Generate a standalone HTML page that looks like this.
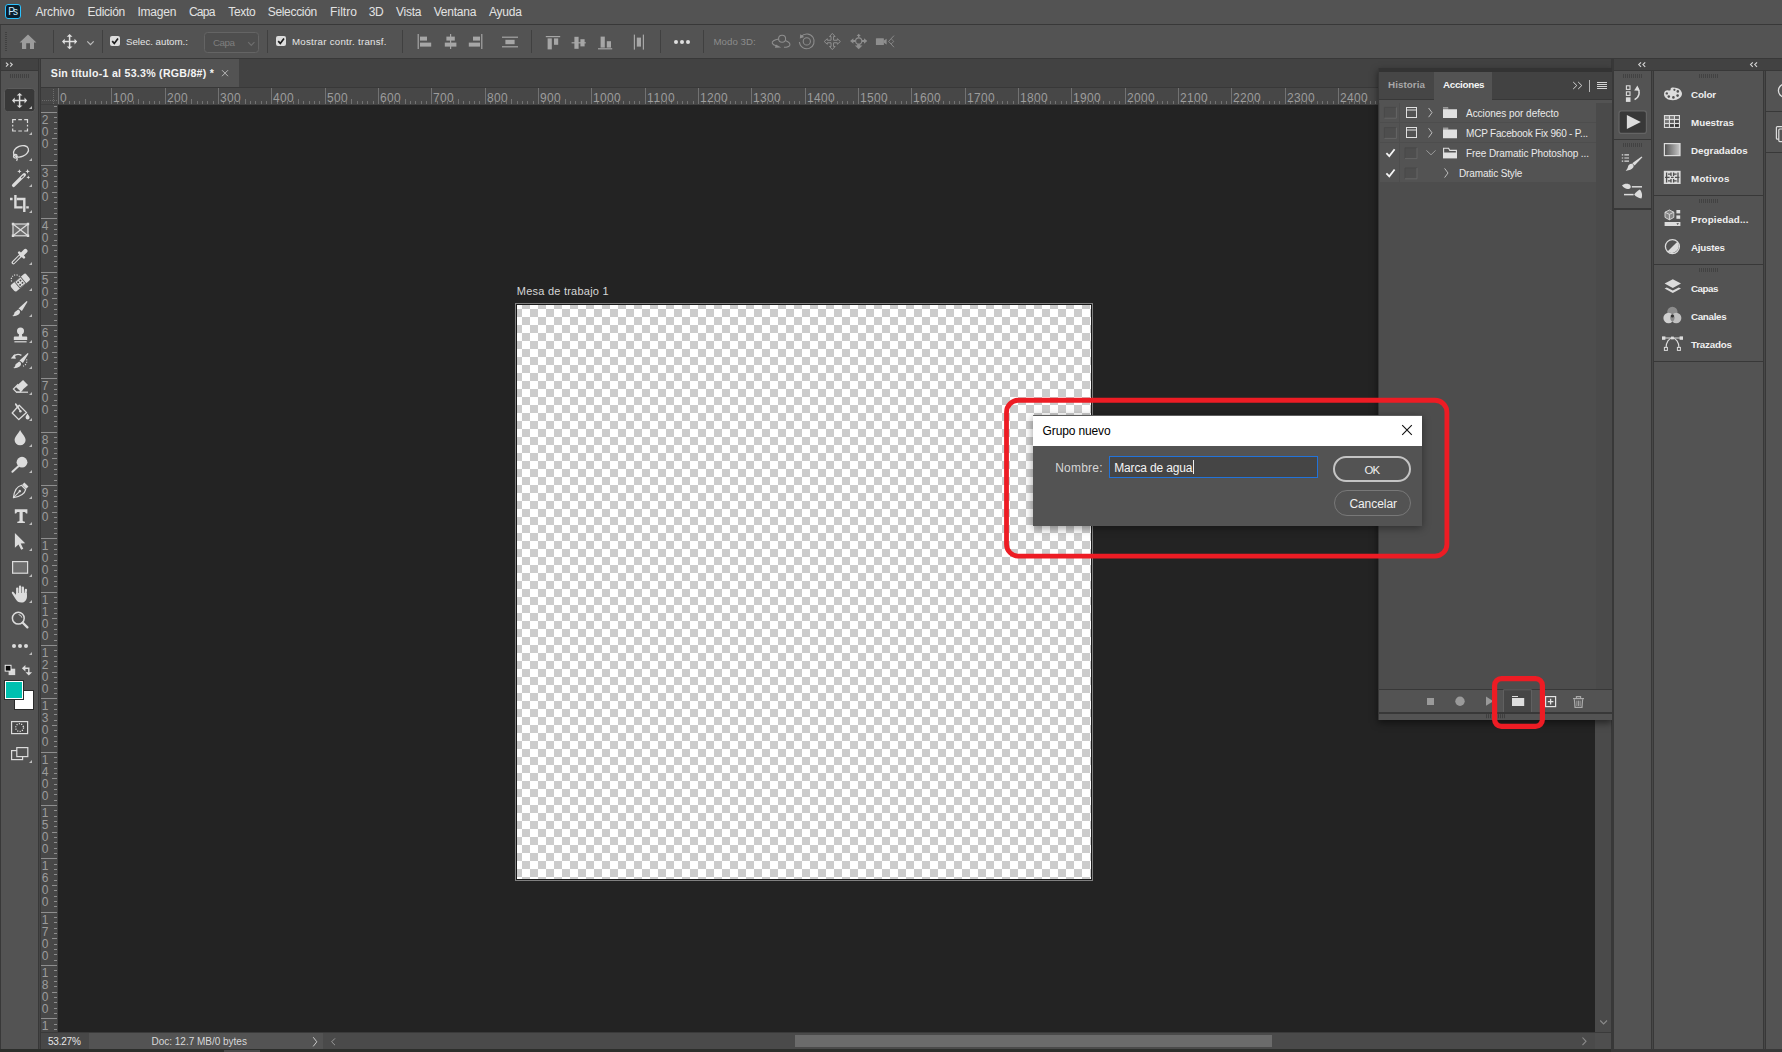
<!DOCTYPE html>
<html lang="es"><head><meta charset="utf-8"><title>Photoshop - Grupo nuevo</title>
<style>
html,body{margin:0;padding:0;}
body{width:1782px;height:1052px;overflow:hidden;background:#535353;position:relative;font-family:"Liberation Sans",sans-serif;}
#app{position:absolute;left:0;top:0;width:1782px;height:1052px;overflow:hidden;}
#app div,#app svg,#app span.t{position:absolute;}
span.t{white-space:nowrap;line-height:1;}
svg{overflow:visible;}
</style></head><body><div id="app">
<div style="left:0px;top:0px;width:1782px;height:24px;background:#535353;"></div>
<div style="left:0px;top:24px;width:1782px;height:1px;background:#383838;"></div>
<div style="left:5px;top:4px;width:14px;height:13px;background:#0a1e2c;border:1px solid #2cc2ff;border-radius:3px;"></div>
<span class="t" style="left:8.20px;top:6.54px;font-size:10px;color:#c8ecff;letter-spacing:-1.870px;">Ps</span>
<span class="t" style="left:35.40px;top:5.64px;font-size:12px;color:#e2e2e2;letter-spacing:-0.136px;">Archivo</span>
<span class="t" style="left:87.50px;top:5.64px;font-size:12px;color:#e2e2e2;letter-spacing:-0.276px;">Edición</span>
<span class="t" style="left:137.50px;top:5.64px;font-size:12px;color:#e2e2e2;letter-spacing:-0.245px;">Imagen</span>
<span class="t" style="left:189.00px;top:5.64px;font-size:12px;color:#e2e2e2;letter-spacing:-0.796px;">Capa</span>
<span class="t" style="left:228.20px;top:5.64px;font-size:12px;color:#e2e2e2;letter-spacing:-0.270px;">Texto</span>
<span class="t" style="left:267.70px;top:5.64px;font-size:12px;color:#e2e2e2;letter-spacing:-0.316px;">Selección</span>
<span class="t" style="left:330.00px;top:5.64px;font-size:12px;color:#e2e2e2;letter-spacing:0.067px;">Filtro</span>
<span class="t" style="left:368.70px;top:5.64px;font-size:12px;color:#e2e2e2;letter-spacing:-0.240px;">3D</span>
<span class="t" style="left:396.00px;top:5.64px;font-size:12px;color:#e2e2e2;letter-spacing:-0.240px;">Vista</span>
<span class="t" style="left:433.70px;top:5.64px;font-size:12px;color:#e2e2e2;letter-spacing:-0.224px;">Ventana</span>
<span class="t" style="left:488.90px;top:5.64px;font-size:12px;color:#e2e2e2;letter-spacing:-0.202px;">Ayuda</span>
<div style="left:0px;top:25px;width:1782px;height:33px;background:#535353;"></div>
<div style="left:0px;top:58px;width:1782px;height:1px;background:#383838;"></div>
<div style="left:0px;top:25px;width:1px;height:33px;background:#3e3e3e;"></div>
<div style="left:0px;top:59px;width:41px;height:993px;background:#383838;"></div>
<div style="left:1px;top:59px;width:37px;height:11px;background:#424242;"></div>
<div style="left:1px;top:71px;width:37px;height:978px;background:#535353;"></div>
<div style="left:39px;top:59px;width:1px;height:990px;background:#444444;"></div>
<div style="left:41px;top:59px;width:1571px;height:28px;background:#424242;"></div>
<div style="left:41px;top:59px;width:198px;height:28px;background:#535353;"></div>
<div style="left:41px;top:87px;width:1571px;height:1px;background:#383838;"></div>
<span class="t" style="left:50.80px;top:68.13px;font-size:10.6px;color:#f4f4f4;font-weight:700;letter-spacing:0.267px;">Sin título-1 al 53.3% (RGB/8#) *</span>
<svg style="left:221px;top:69px;" width="8" height="8" viewBox="221 69 8 8"><path d="M222,70.2 L228,76.2 M228,70.2 L222,76.2" stroke="#b8b8b8" stroke-width="1" fill="none"/></svg>
<div style="left:41px;top:88px;width:1571px;height:17px;background:#474747;"></div>
<div style="left:41px;top:105px;width:17px;height:928px;background:#474747;"></div>
<div style="left:58px;top:105px;width:1537px;height:928px;background:#232323;"></div>
<div style="left:1595px;top:105px;width:16px;height:928px;background:#4a4a4a;"></div>
<div style="left:1611px;top:59px;width:3px;height:993px;background:#383838;"></div>
<div style="left:1612px;top:59px;width:1px;height:990px;background:#484848;"></div>
<div style="left:41px;top:104px;width:1571px;height:1px;background:#3f3f3f;"></div>
<div style="left:57px;top:105px;width:1px;height:928px;background:#3f3f3f;"></div>
<svg style="left:41px;top:88px;" width="1571" height="17" viewBox="41 88 1571 17"><g fill="#727272"><rect x="58" y="88" width="1" height="16"/><rect x="63" y="101" width="1" height="3"/><rect x="69" y="101" width="1" height="3"/><rect x="74" y="101" width="1" height="3"/><rect x="79" y="101" width="1" height="3"/><rect x="85" y="99" width="1" height="5"/><rect x="90" y="101" width="1" height="3"/><rect x="95" y="101" width="1" height="3"/><rect x="101" y="101" width="1" height="3"/><rect x="106" y="101" width="1" height="3"/><rect x="111" y="88" width="1" height="16"/><rect x="117" y="101" width="1" height="3"/><rect x="122" y="101" width="1" height="3"/><rect x="127" y="101" width="1" height="3"/><rect x="133" y="101" width="1" height="3"/><rect x="138" y="99" width="1" height="5"/><rect x="143" y="101" width="1" height="3"/><rect x="149" y="101" width="1" height="3"/><rect x="154" y="101" width="1" height="3"/><rect x="159" y="101" width="1" height="3"/><rect x="165" y="88" width="1" height="16"/><rect x="170" y="101" width="1" height="3"/><rect x="175" y="101" width="1" height="3"/><rect x="181" y="101" width="1" height="3"/><rect x="186" y="101" width="1" height="3"/><rect x="191" y="99" width="1" height="5"/><rect x="197" y="101" width="1" height="3"/><rect x="202" y="101" width="1" height="3"/><rect x="207" y="101" width="1" height="3"/><rect x="213" y="101" width="1" height="3"/><rect x="218" y="88" width="1" height="16"/><rect x="223" y="101" width="1" height="3"/><rect x="229" y="101" width="1" height="3"/><rect x="234" y="101" width="1" height="3"/><rect x="239" y="101" width="1" height="3"/><rect x="245" y="99" width="1" height="5"/><rect x="250" y="101" width="1" height="3"/><rect x="255" y="101" width="1" height="3"/><rect x="261" y="101" width="1" height="3"/><rect x="266" y="101" width="1" height="3"/><rect x="271" y="88" width="1" height="16"/><rect x="277" y="101" width="1" height="3"/><rect x="282" y="101" width="1" height="3"/><rect x="287" y="101" width="1" height="3"/><rect x="293" y="101" width="1" height="3"/><rect x="298" y="99" width="1" height="5"/><rect x="303" y="101" width="1" height="3"/><rect x="309" y="101" width="1" height="3"/><rect x="314" y="101" width="1" height="3"/><rect x="319" y="101" width="1" height="3"/><rect x="325" y="88" width="1" height="16"/><rect x="330" y="101" width="1" height="3"/><rect x="335" y="101" width="1" height="3"/><rect x="341" y="101" width="1" height="3"/><rect x="346" y="101" width="1" height="3"/><rect x="351" y="99" width="1" height="5"/><rect x="357" y="101" width="1" height="3"/><rect x="362" y="101" width="1" height="3"/><rect x="367" y="101" width="1" height="3"/><rect x="373" y="101" width="1" height="3"/><rect x="378" y="88" width="1" height="16"/><rect x="383" y="101" width="1" height="3"/><rect x="389" y="101" width="1" height="3"/><rect x="394" y="101" width="1" height="3"/><rect x="399" y="101" width="1" height="3"/><rect x="405" y="99" width="1" height="5"/><rect x="410" y="101" width="1" height="3"/><rect x="415" y="101" width="1" height="3"/><rect x="421" y="101" width="1" height="3"/><rect x="426" y="101" width="1" height="3"/><rect x="431" y="88" width="1" height="16"/><rect x="437" y="101" width="1" height="3"/><rect x="442" y="101" width="1" height="3"/><rect x="447" y="101" width="1" height="3"/><rect x="453" y="101" width="1" height="3"/><rect x="458" y="99" width="1" height="5"/><rect x="463" y="101" width="1" height="3"/><rect x="469" y="101" width="1" height="3"/><rect x="474" y="101" width="1" height="3"/><rect x="479" y="101" width="1" height="3"/><rect x="485" y="88" width="1" height="16"/><rect x="490" y="101" width="1" height="3"/><rect x="495" y="101" width="1" height="3"/><rect x="501" y="101" width="1" height="3"/><rect x="506" y="101" width="1" height="3"/><rect x="511" y="99" width="1" height="5"/><rect x="517" y="101" width="1" height="3"/><rect x="522" y="101" width="1" height="3"/><rect x="527" y="101" width="1" height="3"/><rect x="533" y="101" width="1" height="3"/><rect x="538" y="88" width="1" height="16"/><rect x="543" y="101" width="1" height="3"/><rect x="549" y="101" width="1" height="3"/><rect x="554" y="101" width="1" height="3"/><rect x="559" y="101" width="1" height="3"/><rect x="565" y="99" width="1" height="5"/><rect x="570" y="101" width="1" height="3"/><rect x="575" y="101" width="1" height="3"/><rect x="581" y="101" width="1" height="3"/><rect x="586" y="101" width="1" height="3"/><rect x="591" y="88" width="1" height="16"/><rect x="597" y="101" width="1" height="3"/><rect x="602" y="101" width="1" height="3"/><rect x="607" y="101" width="1" height="3"/><rect x="613" y="101" width="1" height="3"/><rect x="618" y="99" width="1" height="5"/><rect x="623" y="101" width="1" height="3"/><rect x="629" y="101" width="1" height="3"/><rect x="634" y="101" width="1" height="3"/><rect x="639" y="101" width="1" height="3"/><rect x="645" y="88" width="1" height="16"/><rect x="650" y="101" width="1" height="3"/><rect x="655" y="101" width="1" height="3"/><rect x="661" y="101" width="1" height="3"/><rect x="666" y="101" width="1" height="3"/><rect x="671" y="99" width="1" height="5"/><rect x="677" y="101" width="1" height="3"/><rect x="682" y="101" width="1" height="3"/><rect x="687" y="101" width="1" height="3"/><rect x="693" y="101" width="1" height="3"/><rect x="698" y="88" width="1" height="16"/><rect x="703" y="101" width="1" height="3"/><rect x="709" y="101" width="1" height="3"/><rect x="714" y="101" width="1" height="3"/><rect x="719" y="101" width="1" height="3"/><rect x="725" y="99" width="1" height="5"/><rect x="730" y="101" width="1" height="3"/><rect x="735" y="101" width="1" height="3"/><rect x="741" y="101" width="1" height="3"/><rect x="746" y="101" width="1" height="3"/><rect x="751" y="88" width="1" height="16"/><rect x="757" y="101" width="1" height="3"/><rect x="762" y="101" width="1" height="3"/><rect x="767" y="101" width="1" height="3"/><rect x="773" y="101" width="1" height="3"/><rect x="778" y="99" width="1" height="5"/><rect x="783" y="101" width="1" height="3"/><rect x="789" y="101" width="1" height="3"/><rect x="794" y="101" width="1" height="3"/><rect x="799" y="101" width="1" height="3"/><rect x="805" y="88" width="1" height="16"/><rect x="810" y="101" width="1" height="3"/><rect x="815" y="101" width="1" height="3"/><rect x="821" y="101" width="1" height="3"/><rect x="826" y="101" width="1" height="3"/><rect x="831" y="99" width="1" height="5"/><rect x="837" y="101" width="1" height="3"/><rect x="842" y="101" width="1" height="3"/><rect x="847" y="101" width="1" height="3"/><rect x="853" y="101" width="1" height="3"/><rect x="858" y="88" width="1" height="16"/><rect x="863" y="101" width="1" height="3"/><rect x="869" y="101" width="1" height="3"/><rect x="874" y="101" width="1" height="3"/><rect x="879" y="101" width="1" height="3"/><rect x="885" y="99" width="1" height="5"/><rect x="890" y="101" width="1" height="3"/><rect x="895" y="101" width="1" height="3"/><rect x="901" y="101" width="1" height="3"/><rect x="906" y="101" width="1" height="3"/><rect x="911" y="88" width="1" height="16"/><rect x="917" y="101" width="1" height="3"/><rect x="922" y="101" width="1" height="3"/><rect x="927" y="101" width="1" height="3"/><rect x="933" y="101" width="1" height="3"/><rect x="938" y="99" width="1" height="5"/><rect x="943" y="101" width="1" height="3"/><rect x="949" y="101" width="1" height="3"/><rect x="954" y="101" width="1" height="3"/><rect x="959" y="101" width="1" height="3"/><rect x="965" y="88" width="1" height="16"/><rect x="970" y="101" width="1" height="3"/><rect x="975" y="101" width="1" height="3"/><rect x="981" y="101" width="1" height="3"/><rect x="986" y="101" width="1" height="3"/><rect x="991" y="99" width="1" height="5"/><rect x="997" y="101" width="1" height="3"/><rect x="1002" y="101" width="1" height="3"/><rect x="1007" y="101" width="1" height="3"/><rect x="1013" y="101" width="1" height="3"/><rect x="1018" y="88" width="1" height="16"/><rect x="1023" y="101" width="1" height="3"/><rect x="1029" y="101" width="1" height="3"/><rect x="1034" y="101" width="1" height="3"/><rect x="1039" y="101" width="1" height="3"/><rect x="1045" y="99" width="1" height="5"/><rect x="1050" y="101" width="1" height="3"/><rect x="1055" y="101" width="1" height="3"/><rect x="1061" y="101" width="1" height="3"/><rect x="1066" y="101" width="1" height="3"/><rect x="1071" y="88" width="1" height="16"/><rect x="1077" y="101" width="1" height="3"/><rect x="1082" y="101" width="1" height="3"/><rect x="1087" y="101" width="1" height="3"/><rect x="1093" y="101" width="1" height="3"/><rect x="1098" y="99" width="1" height="5"/><rect x="1103" y="101" width="1" height="3"/><rect x="1109" y="101" width="1" height="3"/><rect x="1114" y="101" width="1" height="3"/><rect x="1119" y="101" width="1" height="3"/><rect x="1125" y="88" width="1" height="16"/><rect x="1130" y="101" width="1" height="3"/><rect x="1135" y="101" width="1" height="3"/><rect x="1141" y="101" width="1" height="3"/><rect x="1146" y="101" width="1" height="3"/><rect x="1151" y="99" width="1" height="5"/><rect x="1157" y="101" width="1" height="3"/><rect x="1162" y="101" width="1" height="3"/><rect x="1167" y="101" width="1" height="3"/><rect x="1173" y="101" width="1" height="3"/><rect x="1178" y="88" width="1" height="16"/><rect x="1183" y="101" width="1" height="3"/><rect x="1189" y="101" width="1" height="3"/><rect x="1194" y="101" width="1" height="3"/><rect x="1199" y="101" width="1" height="3"/><rect x="1205" y="99" width="1" height="5"/><rect x="1210" y="101" width="1" height="3"/><rect x="1215" y="101" width="1" height="3"/><rect x="1221" y="101" width="1" height="3"/><rect x="1226" y="101" width="1" height="3"/><rect x="1231" y="88" width="1" height="16"/><rect x="1237" y="101" width="1" height="3"/><rect x="1242" y="101" width="1" height="3"/><rect x="1247" y="101" width="1" height="3"/><rect x="1253" y="101" width="1" height="3"/><rect x="1258" y="99" width="1" height="5"/><rect x="1263" y="101" width="1" height="3"/><rect x="1269" y="101" width="1" height="3"/><rect x="1274" y="101" width="1" height="3"/><rect x="1279" y="101" width="1" height="3"/><rect x="1285" y="88" width="1" height="16"/><rect x="1290" y="101" width="1" height="3"/><rect x="1295" y="101" width="1" height="3"/><rect x="1301" y="101" width="1" height="3"/><rect x="1306" y="101" width="1" height="3"/><rect x="1311" y="99" width="1" height="5"/><rect x="1317" y="101" width="1" height="3"/><rect x="1322" y="101" width="1" height="3"/><rect x="1327" y="101" width="1" height="3"/><rect x="1333" y="101" width="1" height="3"/><rect x="1338" y="88" width="1" height="16"/><rect x="1343" y="101" width="1" height="3"/><rect x="1349" y="101" width="1" height="3"/><rect x="1354" y="101" width="1" height="3"/><rect x="1359" y="101" width="1" height="3"/><rect x="1365" y="99" width="1" height="5"/><rect x="1370" y="101" width="1" height="3"/><rect x="1375" y="101" width="1" height="3"/><rect x="1381" y="101" width="1" height="3"/><rect x="1386" y="101" width="1" height="3"/><rect x="1391" y="88" width="1" height="16"/><rect x="1397" y="101" width="1" height="3"/><rect x="1402" y="101" width="1" height="3"/><rect x="1407" y="101" width="1" height="3"/><rect x="1413" y="101" width="1" height="3"/><rect x="1418" y="99" width="1" height="5"/><rect x="1423" y="101" width="1" height="3"/><rect x="1429" y="101" width="1" height="3"/><rect x="1434" y="101" width="1" height="3"/><rect x="1439" y="101" width="1" height="3"/><rect x="1445" y="88" width="1" height="16"/><rect x="1450" y="101" width="1" height="3"/><rect x="1455" y="101" width="1" height="3"/><rect x="1461" y="101" width="1" height="3"/><rect x="1466" y="101" width="1" height="3"/><rect x="1471" y="99" width="1" height="5"/><rect x="1477" y="101" width="1" height="3"/><rect x="1482" y="101" width="1" height="3"/><rect x="1487" y="101" width="1" height="3"/><rect x="1493" y="101" width="1" height="3"/><rect x="1498" y="88" width="1" height="16"/><rect x="1503" y="101" width="1" height="3"/><rect x="1509" y="101" width="1" height="3"/><rect x="1514" y="101" width="1" height="3"/><rect x="1519" y="101" width="1" height="3"/><rect x="1525" y="99" width="1" height="5"/><rect x="1530" y="101" width="1" height="3"/><rect x="1535" y="101" width="1" height="3"/><rect x="1541" y="101" width="1" height="3"/><rect x="1546" y="101" width="1" height="3"/><rect x="1551" y="88" width="1" height="16"/><rect x="1557" y="101" width="1" height="3"/><rect x="1562" y="101" width="1" height="3"/><rect x="1567" y="101" width="1" height="3"/><rect x="1573" y="101" width="1" height="3"/><rect x="1578" y="99" width="1" height="5"/><rect x="1583" y="101" width="1" height="3"/><rect x="1589" y="101" width="1" height="3"/><rect x="1594" y="101" width="1" height="3"/><rect x="1599" y="101" width="1" height="3"/><rect x="1605" y="88" width="1" height="16"/><rect x="1610" y="101" width="1" height="3"/></g></svg>
<span class="t" style="left:60.10px;top:91.54px;font-size:12px;color:#9c9c9c;letter-spacing:-0.004px;">0</span>
<span class="t" style="left:113.10px;top:91.54px;font-size:12px;color:#9c9c9c;letter-spacing:0.324px;">100</span>
<span class="t" style="left:167.10px;top:91.54px;font-size:12px;color:#9c9c9c;letter-spacing:0.324px;">200</span>
<span class="t" style="left:220.10px;top:91.54px;font-size:12px;color:#9c9c9c;letter-spacing:0.324px;">300</span>
<span class="t" style="left:273.10px;top:91.54px;font-size:12px;color:#9c9c9c;letter-spacing:0.324px;">400</span>
<span class="t" style="left:327.10px;top:91.54px;font-size:12px;color:#9c9c9c;letter-spacing:0.324px;">500</span>
<span class="t" style="left:380.10px;top:91.54px;font-size:12px;color:#9c9c9c;letter-spacing:0.324px;">600</span>
<span class="t" style="left:433.10px;top:91.54px;font-size:12px;color:#9c9c9c;letter-spacing:0.324px;">700</span>
<span class="t" style="left:487.10px;top:91.54px;font-size:12px;color:#9c9c9c;letter-spacing:0.324px;">800</span>
<span class="t" style="left:540.10px;top:91.54px;font-size:12px;color:#9c9c9c;letter-spacing:0.324px;">900</span>
<span class="t" style="left:593.10px;top:91.54px;font-size:12px;color:#9c9c9c;letter-spacing:0.325px;">1000</span>
<span class="t" style="left:647.10px;top:91.54px;font-size:12px;color:#9c9c9c;letter-spacing:0.622px;">1100</span>
<span class="t" style="left:700.10px;top:91.54px;font-size:12px;color:#9c9c9c;letter-spacing:0.325px;">1200</span>
<span class="t" style="left:753.10px;top:91.54px;font-size:12px;color:#9c9c9c;letter-spacing:0.325px;">1300</span>
<span class="t" style="left:807.10px;top:91.54px;font-size:12px;color:#9c9c9c;letter-spacing:0.325px;">1400</span>
<span class="t" style="left:860.10px;top:91.54px;font-size:12px;color:#9c9c9c;letter-spacing:0.325px;">1500</span>
<span class="t" style="left:913.10px;top:91.54px;font-size:12px;color:#9c9c9c;letter-spacing:0.325px;">1600</span>
<span class="t" style="left:967.10px;top:91.54px;font-size:12px;color:#9c9c9c;letter-spacing:0.325px;">1700</span>
<span class="t" style="left:1020.10px;top:91.54px;font-size:12px;color:#9c9c9c;letter-spacing:0.325px;">1800</span>
<span class="t" style="left:1073.10px;top:91.54px;font-size:12px;color:#9c9c9c;letter-spacing:0.325px;">1900</span>
<span class="t" style="left:1127.10px;top:91.54px;font-size:12px;color:#9c9c9c;letter-spacing:0.325px;">2000</span>
<span class="t" style="left:1180.10px;top:91.54px;font-size:12px;color:#9c9c9c;letter-spacing:0.325px;">2100</span>
<span class="t" style="left:1233.10px;top:91.54px;font-size:12px;color:#9c9c9c;letter-spacing:0.325px;">2200</span>
<span class="t" style="left:1287.10px;top:91.54px;font-size:12px;color:#9c9c9c;letter-spacing:0.325px;">2300</span>
<span class="t" style="left:1340.10px;top:91.54px;font-size:12px;color:#9c9c9c;letter-spacing:0.325px;">2400</span>
<span class="t" style="left:1393.10px;top:91.54px;font-size:12px;color:#9c9c9c;letter-spacing:0.325px;">2500</span>
<span class="t" style="left:1447.10px;top:91.54px;font-size:12px;color:#9c9c9c;letter-spacing:0.325px;">2600</span>
<span class="t" style="left:1500.10px;top:91.54px;font-size:12px;color:#9c9c9c;letter-spacing:0.325px;">2700</span>
<span class="t" style="left:1553.10px;top:91.54px;font-size:12px;color:#9c9c9c;letter-spacing:0.325px;">2800</span>
<svg style="left:41px;top:105px;" width="17" height="928" viewBox="41 105 17 928"><g fill="#8e8e8e"><rect x="54" y="106" width="3" height="1"/><rect x="41" y="112" width="16" height="1"/><rect x="54" y="117" width="3" height="1"/><rect x="54" y="122" width="3" height="1"/><rect x="54" y="128" width="3" height="1"/><rect x="54" y="133" width="3" height="1"/><rect x="52" y="138" width="5" height="1"/><rect x="54" y="144" width="3" height="1"/><rect x="54" y="149" width="3" height="1"/><rect x="54" y="154" width="3" height="1"/><rect x="54" y="160" width="3" height="1"/><rect x="41" y="165" width="16" height="1"/><rect x="54" y="170" width="3" height="1"/><rect x="54" y="176" width="3" height="1"/><rect x="54" y="181" width="3" height="1"/><rect x="54" y="186" width="3" height="1"/><rect x="52" y="192" width="5" height="1"/><rect x="54" y="197" width="3" height="1"/><rect x="54" y="202" width="3" height="1"/><rect x="54" y="208" width="3" height="1"/><rect x="54" y="213" width="3" height="1"/><rect x="41" y="218" width="16" height="1"/><rect x="54" y="224" width="3" height="1"/><rect x="54" y="229" width="3" height="1"/><rect x="54" y="234" width="3" height="1"/><rect x="54" y="240" width="3" height="1"/><rect x="52" y="245" width="5" height="1"/><rect x="54" y="250" width="3" height="1"/><rect x="54" y="256" width="3" height="1"/><rect x="54" y="261" width="3" height="1"/><rect x="54" y="266" width="3" height="1"/><rect x="41" y="272" width="16" height="1"/><rect x="54" y="277" width="3" height="1"/><rect x="54" y="282" width="3" height="1"/><rect x="54" y="288" width="3" height="1"/><rect x="54" y="293" width="3" height="1"/><rect x="52" y="298" width="5" height="1"/><rect x="54" y="304" width="3" height="1"/><rect x="54" y="309" width="3" height="1"/><rect x="54" y="314" width="3" height="1"/><rect x="54" y="320" width="3" height="1"/><rect x="41" y="325" width="16" height="1"/><rect x="54" y="330" width="3" height="1"/><rect x="54" y="336" width="3" height="1"/><rect x="54" y="341" width="3" height="1"/><rect x="54" y="346" width="3" height="1"/><rect x="52" y="352" width="5" height="1"/><rect x="54" y="357" width="3" height="1"/><rect x="54" y="362" width="3" height="1"/><rect x="54" y="368" width="3" height="1"/><rect x="54" y="373" width="3" height="1"/><rect x="41" y="378" width="16" height="1"/><rect x="54" y="384" width="3" height="1"/><rect x="54" y="389" width="3" height="1"/><rect x="54" y="394" width="3" height="1"/><rect x="54" y="400" width="3" height="1"/><rect x="52" y="405" width="5" height="1"/><rect x="54" y="410" width="3" height="1"/><rect x="54" y="416" width="3" height="1"/><rect x="54" y="421" width="3" height="1"/><rect x="54" y="426" width="3" height="1"/><rect x="41" y="432" width="16" height="1"/><rect x="54" y="437" width="3" height="1"/><rect x="54" y="442" width="3" height="1"/><rect x="54" y="448" width="3" height="1"/><rect x="54" y="453" width="3" height="1"/><rect x="52" y="458" width="5" height="1"/><rect x="54" y="464" width="3" height="1"/><rect x="54" y="469" width="3" height="1"/><rect x="54" y="474" width="3" height="1"/><rect x="54" y="480" width="3" height="1"/><rect x="41" y="485" width="16" height="1"/><rect x="54" y="490" width="3" height="1"/><rect x="54" y="496" width="3" height="1"/><rect x="54" y="501" width="3" height="1"/><rect x="54" y="506" width="3" height="1"/><rect x="52" y="512" width="5" height="1"/><rect x="54" y="517" width="3" height="1"/><rect x="54" y="522" width="3" height="1"/><rect x="54" y="528" width="3" height="1"/><rect x="54" y="533" width="3" height="1"/><rect x="41" y="538" width="16" height="1"/><rect x="54" y="544" width="3" height="1"/><rect x="54" y="549" width="3" height="1"/><rect x="54" y="554" width="3" height="1"/><rect x="54" y="560" width="3" height="1"/><rect x="52" y="565" width="5" height="1"/><rect x="54" y="570" width="3" height="1"/><rect x="54" y="576" width="3" height="1"/><rect x="54" y="581" width="3" height="1"/><rect x="54" y="586" width="3" height="1"/><rect x="41" y="592" width="16" height="1"/><rect x="54" y="597" width="3" height="1"/><rect x="54" y="602" width="3" height="1"/><rect x="54" y="608" width="3" height="1"/><rect x="54" y="613" width="3" height="1"/><rect x="52" y="618" width="5" height="1"/><rect x="54" y="624" width="3" height="1"/><rect x="54" y="629" width="3" height="1"/><rect x="54" y="634" width="3" height="1"/><rect x="54" y="640" width="3" height="1"/><rect x="41" y="645" width="16" height="1"/><rect x="54" y="650" width="3" height="1"/><rect x="54" y="656" width="3" height="1"/><rect x="54" y="661" width="3" height="1"/><rect x="54" y="666" width="3" height="1"/><rect x="52" y="672" width="5" height="1"/><rect x="54" y="677" width="3" height="1"/><rect x="54" y="682" width="3" height="1"/><rect x="54" y="688" width="3" height="1"/><rect x="54" y="693" width="3" height="1"/><rect x="41" y="698" width="16" height="1"/><rect x="54" y="704" width="3" height="1"/><rect x="54" y="709" width="3" height="1"/><rect x="54" y="714" width="3" height="1"/><rect x="54" y="720" width="3" height="1"/><rect x="52" y="725" width="5" height="1"/><rect x="54" y="730" width="3" height="1"/><rect x="54" y="736" width="3" height="1"/><rect x="54" y="741" width="3" height="1"/><rect x="54" y="746" width="3" height="1"/><rect x="41" y="752" width="16" height="1"/><rect x="54" y="757" width="3" height="1"/><rect x="54" y="762" width="3" height="1"/><rect x="54" y="768" width="3" height="1"/><rect x="54" y="773" width="3" height="1"/><rect x="52" y="778" width="5" height="1"/><rect x="54" y="784" width="3" height="1"/><rect x="54" y="789" width="3" height="1"/><rect x="54" y="794" width="3" height="1"/><rect x="54" y="800" width="3" height="1"/><rect x="41" y="805" width="16" height="1"/><rect x="54" y="810" width="3" height="1"/><rect x="54" y="816" width="3" height="1"/><rect x="54" y="821" width="3" height="1"/><rect x="54" y="826" width="3" height="1"/><rect x="52" y="832" width="5" height="1"/><rect x="54" y="837" width="3" height="1"/><rect x="54" y="842" width="3" height="1"/><rect x="54" y="848" width="3" height="1"/><rect x="54" y="853" width="3" height="1"/><rect x="41" y="858" width="16" height="1"/><rect x="54" y="864" width="3" height="1"/><rect x="54" y="869" width="3" height="1"/><rect x="54" y="874" width="3" height="1"/><rect x="54" y="880" width="3" height="1"/><rect x="52" y="885" width="5" height="1"/><rect x="54" y="890" width="3" height="1"/><rect x="54" y="896" width="3" height="1"/><rect x="54" y="901" width="3" height="1"/><rect x="54" y="906" width="3" height="1"/><rect x="41" y="912" width="16" height="1"/><rect x="54" y="917" width="3" height="1"/><rect x="54" y="922" width="3" height="1"/><rect x="54" y="928" width="3" height="1"/><rect x="54" y="933" width="3" height="1"/><rect x="52" y="938" width="5" height="1"/><rect x="54" y="944" width="3" height="1"/><rect x="54" y="949" width="3" height="1"/><rect x="54" y="954" width="3" height="1"/><rect x="54" y="960" width="3" height="1"/><rect x="41" y="965" width="16" height="1"/><rect x="54" y="970" width="3" height="1"/><rect x="54" y="976" width="3" height="1"/><rect x="54" y="981" width="3" height="1"/><rect x="54" y="986" width="3" height="1"/><rect x="52" y="992" width="5" height="1"/><rect x="54" y="997" width="3" height="1"/><rect x="54" y="1002" width="3" height="1"/><rect x="54" y="1008" width="3" height="1"/><rect x="54" y="1013" width="3" height="1"/><rect x="41" y="1018" width="16" height="1"/><rect x="54" y="1024" width="3" height="1"/><rect x="54" y="1029" width="3" height="1"/></g></svg>
<div style="left:41px;top:105px;width:17px;height:928px;overflow:hidden;">
<span class="t" style="left:0.8px;top:9.44px;font-size:12px;color:#9c9c9c;">2</span>
<span class="t" style="left:0.8px;top:21.34px;font-size:12px;color:#9c9c9c;">0</span>
<span class="t" style="left:0.8px;top:33.24px;font-size:12px;color:#9c9c9c;">0</span>
<span class="t" style="left:0.8px;top:62.44px;font-size:12px;color:#9c9c9c;">3</span>
<span class="t" style="left:0.8px;top:74.34px;font-size:12px;color:#9c9c9c;">0</span>
<span class="t" style="left:0.8px;top:86.24px;font-size:12px;color:#9c9c9c;">0</span>
<span class="t" style="left:0.8px;top:115.44px;font-size:12px;color:#9c9c9c;">4</span>
<span class="t" style="left:0.8px;top:127.34px;font-size:12px;color:#9c9c9c;">0</span>
<span class="t" style="left:0.8px;top:139.24px;font-size:12px;color:#9c9c9c;">0</span>
<span class="t" style="left:0.8px;top:169.44px;font-size:12px;color:#9c9c9c;">5</span>
<span class="t" style="left:0.8px;top:181.34px;font-size:12px;color:#9c9c9c;">0</span>
<span class="t" style="left:0.8px;top:193.24px;font-size:12px;color:#9c9c9c;">0</span>
<span class="t" style="left:0.8px;top:222.44px;font-size:12px;color:#9c9c9c;">6</span>
<span class="t" style="left:0.8px;top:234.34px;font-size:12px;color:#9c9c9c;">0</span>
<span class="t" style="left:0.8px;top:246.24px;font-size:12px;color:#9c9c9c;">0</span>
<span class="t" style="left:0.8px;top:275.44px;font-size:12px;color:#9c9c9c;">7</span>
<span class="t" style="left:0.8px;top:287.34px;font-size:12px;color:#9c9c9c;">0</span>
<span class="t" style="left:0.8px;top:299.24px;font-size:12px;color:#9c9c9c;">0</span>
<span class="t" style="left:0.8px;top:329.44px;font-size:12px;color:#9c9c9c;">8</span>
<span class="t" style="left:0.8px;top:341.34px;font-size:12px;color:#9c9c9c;">0</span>
<span class="t" style="left:0.8px;top:353.24px;font-size:12px;color:#9c9c9c;">0</span>
<span class="t" style="left:0.8px;top:382.44px;font-size:12px;color:#9c9c9c;">9</span>
<span class="t" style="left:0.8px;top:394.34px;font-size:12px;color:#9c9c9c;">0</span>
<span class="t" style="left:0.8px;top:406.24px;font-size:12px;color:#9c9c9c;">0</span>
<span class="t" style="left:0.8px;top:435.44px;font-size:12px;color:#9c9c9c;">1</span>
<span class="t" style="left:0.8px;top:447.34px;font-size:12px;color:#9c9c9c;">0</span>
<span class="t" style="left:0.8px;top:459.24px;font-size:12px;color:#9c9c9c;">0</span>
<span class="t" style="left:0.8px;top:471.14px;font-size:12px;color:#9c9c9c;">0</span>
<span class="t" style="left:0.8px;top:489.44px;font-size:12px;color:#9c9c9c;">1</span>
<span class="t" style="left:0.8px;top:501.34px;font-size:12px;color:#9c9c9c;">1</span>
<span class="t" style="left:0.8px;top:513.24px;font-size:12px;color:#9c9c9c;">0</span>
<span class="t" style="left:0.8px;top:525.14px;font-size:12px;color:#9c9c9c;">0</span>
<span class="t" style="left:0.8px;top:542.44px;font-size:12px;color:#9c9c9c;">1</span>
<span class="t" style="left:0.8px;top:554.34px;font-size:12px;color:#9c9c9c;">2</span>
<span class="t" style="left:0.8px;top:566.24px;font-size:12px;color:#9c9c9c;">0</span>
<span class="t" style="left:0.8px;top:578.14px;font-size:12px;color:#9c9c9c;">0</span>
<span class="t" style="left:0.8px;top:595.44px;font-size:12px;color:#9c9c9c;">1</span>
<span class="t" style="left:0.8px;top:607.34px;font-size:12px;color:#9c9c9c;">3</span>
<span class="t" style="left:0.8px;top:619.24px;font-size:12px;color:#9c9c9c;">0</span>
<span class="t" style="left:0.8px;top:631.14px;font-size:12px;color:#9c9c9c;">0</span>
<span class="t" style="left:0.8px;top:649.44px;font-size:12px;color:#9c9c9c;">1</span>
<span class="t" style="left:0.8px;top:661.34px;font-size:12px;color:#9c9c9c;">4</span>
<span class="t" style="left:0.8px;top:673.24px;font-size:12px;color:#9c9c9c;">0</span>
<span class="t" style="left:0.8px;top:685.14px;font-size:12px;color:#9c9c9c;">0</span>
<span class="t" style="left:0.8px;top:702.44px;font-size:12px;color:#9c9c9c;">1</span>
<span class="t" style="left:0.8px;top:714.34px;font-size:12px;color:#9c9c9c;">5</span>
<span class="t" style="left:0.8px;top:726.24px;font-size:12px;color:#9c9c9c;">0</span>
<span class="t" style="left:0.8px;top:738.14px;font-size:12px;color:#9c9c9c;">0</span>
<span class="t" style="left:0.8px;top:755.44px;font-size:12px;color:#9c9c9c;">1</span>
<span class="t" style="left:0.8px;top:767.34px;font-size:12px;color:#9c9c9c;">6</span>
<span class="t" style="left:0.8px;top:779.24px;font-size:12px;color:#9c9c9c;">0</span>
<span class="t" style="left:0.8px;top:791.14px;font-size:12px;color:#9c9c9c;">0</span>
<span class="t" style="left:0.8px;top:809.44px;font-size:12px;color:#9c9c9c;">1</span>
<span class="t" style="left:0.8px;top:821.34px;font-size:12px;color:#9c9c9c;">7</span>
<span class="t" style="left:0.8px;top:833.24px;font-size:12px;color:#9c9c9c;">0</span>
<span class="t" style="left:0.8px;top:845.14px;font-size:12px;color:#9c9c9c;">0</span>
<span class="t" style="left:0.8px;top:862.44px;font-size:12px;color:#9c9c9c;">1</span>
<span class="t" style="left:0.8px;top:874.34px;font-size:12px;color:#9c9c9c;">8</span>
<span class="t" style="left:0.8px;top:886.24px;font-size:12px;color:#9c9c9c;">0</span>
<span class="t" style="left:0.8px;top:898.14px;font-size:12px;color:#9c9c9c;">0</span>
<span class="t" style="left:0.8px;top:915.44px;font-size:12px;color:#9c9c9c;">1</span>
<span class="t" style="left:0.8px;top:927.34px;font-size:12px;color:#9c9c9c;">9</span>
<span class="t" style="left:0.8px;top:939.24px;font-size:12px;color:#9c9c9c;">0</span>
<span class="t" style="left:0.8px;top:951.14px;font-size:12px;color:#9c9c9c;">0</span>
</div>
<svg style="left:41px;top:88px;" width="17" height="17" viewBox="41 88 17 17"><path d="M42,100.5 H57 M53.5,89 V104" stroke="#6a6a6a" stroke-width="1" stroke-dasharray="1 1" fill="none"/></svg>
<span class="t" style="left:516.80px;top:285.59px;font-size:11px;color:#d6d6d6;letter-spacing:0.234px;">Mesa de trabajo 1</span>
<div style="left:515px;top:303px;width:578px;height:578px;background:#808080;"></div>
<div style="left:516px;top:304px;width:576px;height:576px;background:#1a1a1a;"></div>
<div style="left:517px;top:305px;width:574px;height:574px;background-color:#fff;background-image:conic-gradient(#ccc 0 25%,#fff 0 50%,#ccc 0 75%,#fff 0);background-size:16px 16px;background-position:-11px -12px;"></div>
<div style="left:41px;top:1033px;width:1571px;height:16px;background:#4a4a4a;"></div>
<div style="left:41px;top:1032px;width:1571px;height:1px;background:#3a3a3a;"></div>
<div style="left:41px;top:1033px;width:48px;height:16px;background:#484848;"></div>
<div style="left:89px;top:1033px;width:234px;height:16px;background:#535353;"></div>
<span class="t" style="left:48.00px;top:1036.74px;font-size:10px;color:#e6e6e6;letter-spacing:-0.223px;">53.27%</span>
<span class="t" style="left:151.50px;top:1036.74px;font-size:10px;color:#d8d8d8;letter-spacing:-0.011px;">Doc: 12.7 MB/0 bytes</span>
<svg style="left:310px;top:1035px;" width="30" height="12" viewBox="310 1035 30 12"><path d="M313.2,1037.2 L316.8,1041.8 L313.2,1046.4" stroke="#c8c8c8" stroke-width="1" fill="none"/><path d="M335,1038.4 L331.6,1041.8 L335,1045.2" stroke="#9a9a9a" stroke-width="1" fill="none"/></svg>
<div style="left:795px;top:1035px;width:477px;height:12px;background:#6b6b6b;"></div>
<svg style="left:1575px;top:1035px;" width="40" height="14" viewBox="1575 1035 40 14"><path d="M1582.5,1037.5 L1586,1041.3 L1582.5,1045" stroke="#8a8a8a" stroke-width="1.1" fill="none"/></svg>
<svg style="left:1598px;top:1015px;" width="12" height="10" viewBox="1598 1015 12 10"><path d="M1600.2,1020.5 L1603.6,1024 L1607,1020.5" stroke="#8a8a8a" stroke-width="1.1" fill="none"/></svg>
<div style="left:1595px;top:1033px;width:16px;height:16px;background:#4e4e4e;"></div>
<div style="left:0px;top:1049px;width:1782px;height:3px;background:#2c2e2b;"></div>
<div style="left:224px;top:1050px;width:36px;height:2px;background:#4a4a4a;"></div>
<svg style="left:0px;top:59px;" width="40" height="720" viewBox="0 59 40 720"><path d="M6,62.6 L8,64.6 L6,66.6 M10.2,62.6 L12.2,64.6 L10.2,66.6" stroke="#d0d0d0" stroke-width="1.2" fill="none"/><path d="M10.5,74 V78 M12.5,74 V78 M14.5,74 V78 M16.5,74 V78 M18.5,74 V78 M20.5,74 V78 M22.5,74 V78 M24.5,74 V78 M26.5,74 V78 M28.5,74 V78" stroke="#414141" stroke-width="1"/><rect x="4.5" y="88.5" width="30.4" height="23.2" rx="3" fill="#383838" stroke="#5c5c5c" stroke-width="1"/><path d="M32,106 V109 H29 Z" fill="#bdbdbd"/><path d="M32,132 V135 H29 Z" fill="#bdbdbd"/><path d="M32,158 V161 H29 Z" fill="#bdbdbd"/><path d="M32,184 V187 H29 Z" fill="#bdbdbd"/><path d="M32,210 V213 H29 Z" fill="#bdbdbd"/><path d="M32,262 V265 H29 Z" fill="#bdbdbd"/><path d="M32,288 V291 H29 Z" fill="#bdbdbd"/><path d="M32,314 V317 H29 Z" fill="#bdbdbd"/><path d="M32,340 V343 H29 Z" fill="#bdbdbd"/><path d="M32,366 V369 H29 Z" fill="#bdbdbd"/><path d="M32,392 V395 H29 Z" fill="#bdbdbd"/><path d="M32,418 V421 H29 Z" fill="#bdbdbd"/><path d="M32,444 V447 H29 Z" fill="#bdbdbd"/><path d="M32,470 V473 H29 Z" fill="#bdbdbd"/><path d="M32,496 V499 H29 Z" fill="#bdbdbd"/><path d="M32,522 V525 H29 Z" fill="#bdbdbd"/><path d="M32,548 V551 H29 Z" fill="#bdbdbd"/><path d="M32,574 V577 H29 Z" fill="#bdbdbd"/><path d="M32,600 V603 H29 Z" fill="#bdbdbd"/><path d="M32,652 V655 H29 Z" fill="#bdbdbd"/><path d="M32,760 V763 H29 Z" fill="#bdbdbd"/><path d="M13.500000000000002,100.5 H25.700000000000003 M19.6,94.4 V106.6" stroke="#dcdcdc" stroke-width="1.5" fill="none"/><path d="M12.000000000000002,100.5 l2.7,-2.9 v5.8 Z M27.200000000000003,100.5 l-2.7,-2.9 v5.8 Z M19.6,92.9 l-2.9,2.7 h5.8 Z M19.6,108.1 l-2.9,-2.7 h5.8 Z" fill="#dcdcdc"/><path d="M12.7,123 V119.7 H16 M18.3,119.7 H21.9 M24.2,119.7 H27.5 V123 M27.5,124.8 V126.6 M27.5,128.4 V131 H24.2 M21.9,131 H18.3 M16,131 H12.7 V128.4 M12.7,126.6 V124.8" stroke="#dcdcdc" stroke-width="1.2" fill="none"/><g stroke="#dcdcdc" stroke-width="1.3" fill="none"><ellipse cx="21" cy="151.3" rx="7.8" ry="5.3" transform="rotate(-22 21 151.3)"/><circle cx="15.3" cy="156.3" r="1.8"/><path d="M16.6,157.6 C17.6,158.6 17.3,159.8 16.6,160.8"/></g><path d="M13.6,185.4 L24.3,174.8" stroke="#dcdcdc" stroke-width="3.4" stroke-linecap="round"/><path d="M21.6,177.6 L23.4,175.8" stroke="#535353" stroke-width="1.1" stroke-linecap="round"/><path d="M19.4,169.20000000000002 L20.016,170.784 L21.599999999999998,171.4 L20.016,172.01600000000002 L19.4,173.6 L18.784,172.01600000000002 L17.2,171.4 L18.784,170.784 Z" fill="#dcdcdc"/><path d="M27.6,169.0 L28.272000000000002,170.728 L30.0,171.4 L28.272000000000002,172.072 L27.6,173.8 L26.928,172.072 L25.200000000000003,171.4 L26.928,170.728 Z" fill="#dcdcdc"/><path d="M28.3,175.5 L28.832,176.868 L30.2,177.4 L28.832,177.93200000000002 L28.3,179.3 L27.768,177.93200000000002 L26.400000000000002,177.4 L27.768,176.868 Z" fill="#dcdcdc"/><path d="M15.4,195 V207.4 H22.6 M16.9,199 H24.3 V212 M10,199 H12.6 M26.2,207.4 H28.8" stroke="#dcdcdc" stroke-width="2.4" fill="none"/><rect x="13" y="224" width="15" height="11.8" fill="#6c6c6c" stroke="#dcdcdc" stroke-width="1.2"/><path d="M13,224 L28,235.8 M28,224 L13,235.8" stroke="#dcdcdc" stroke-width="1.2"/><path d="M11.8,222.8 h2.4 v2.4 h-2.4 Z M26.8,222.8 h2.4 v2.4 h-2.4 Z M11.8,234.6 h2.4 v2.4 h-2.4 Z M26.8,234.6 h2.4 v2.4 h-2.4 Z" fill="#dcdcdc"/><path d="M13.4,262.6 L20.6,255.4" stroke="#dcdcdc" stroke-width="3.6" stroke-linecap="round"/><path d="M13.6,262.4 L20.2,255.8" stroke="#535353" stroke-width="1.4" stroke-linecap="round"/><path d="M19.2,252.6 L23.9,257.3" stroke="#dcdcdc" stroke-width="2.6" stroke-linecap="round"/><path d="M21.5,254.9 L25.4,251" stroke="#dcdcdc" stroke-width="4.2" stroke-linecap="round"/><g transform="rotate(-40 20.3 282.6)"><rect x="10.3" y="278.3" width="20" height="8.6" rx="2" fill="#dcdcdc"/><rect x="16.1" y="278.3" width="8.4" height="8.6" fill="#535353"/><rect x="16.9" y="278.9" width="6.8" height="7.4" fill="#dcdcdc"/><circle cx="18.8" cy="281" r="0.95" fill="#4a4a4a"/><circle cx="21.8" cy="281" r="0.95" fill="#4a4a4a"/><circle cx="18.8" cy="284.2" r="0.95" fill="#4a4a4a"/><circle cx="21.8" cy="284.2" r="0.95" fill="#4a4a4a"/></g><path d="M19.6,276.6 A4.4,4.4 0 1 0 12.3,282.5" stroke="#dcdcdc" stroke-width="1.2" stroke-dasharray="1.1 1.3" fill="none"/><path d="M26.7,301.0 L27.5,301.7 L21.9,311.0 L18.5,308.4 Z" fill="#dcdcdc"/><path d="M18.2,309.6 C20.2,310.4 20.6,312.2 19.4,313.8 C17.8,315.8 14.6,316.4 12,316.1 C13.8,315.2 14.2,313.8 14.6,312.2 C(15, 0),310.4 16.6,309.2 18.2,309.6 Z" fill="#dcdcdc"/><circle cx="20.5" cy="331" r="3.5" fill="#dcdcdc"/><path d="M19.2,333 H21.8 L22.3,337 H18.7 Z" fill="#dcdcdc"/><path d="M14.6,336.6 H26.4 Q27.2,336.6 27.2,337.4 V340 H13.8 V337.4 Q13.8,336.6 14.6,336.6 Z" fill="#dcdcdc"/><path d="M14.4,341.8 H26.6" stroke="#dcdcdc" stroke-width="1.2"/><path d="M27.7,353.0 L28.5,353.7 L22.9,363.0 L19.5,360.4 Z" fill="#dcdcdc"/><path d="M19.2,361.6 C21.2,362.4 21.6,364.2 20.4,365.8 C18.8,367.8 15.6,368.4 13.0,368.1 C14.8,367.2 15.2,365.8 15.6,364.2 C(15, 1.0),362.4 17.6,361.2 19.2,361.6 Z" fill="#dcdcdc"/><path d="M13.6,356.2 C16,354.2 19,354 21.4,355.4" stroke="#dcdcdc" stroke-width="1.3" fill="none"/><path d="M10.8,358.6 L14.6,354 L15.8,358.8 Z" fill="#dcdcdc"/><path d="M26.6,359.4 A5.6,5.6 0 0 1 22.4,366.4" stroke="#dcdcdc" stroke-width="1.2" stroke-dasharray="1 1.4" fill="none"/><path d="M22.2,379.8 L27.8,384 L21.4,391.6 L15.8,387.4 Z" fill="#dcdcdc" transform="rotate(8 21 386)"/><path d="M18.2,384.2 L13.4,389 L16.2,392 H20.2 L22.6,389.4" stroke="#dcdcdc" stroke-width="1.2" fill="none"/><path d="M16,392.2 H28" stroke="#dcdcdc" stroke-width="1.2"/><path d="M19.2,405.2 L26.6,412.6 L18.8,419.6 L12.2,413 Z" stroke="#dcdcdc" stroke-width="1.3" fill="none" stroke-linejoin="round"/><path d="M20.4,411.2 C18.6,408 16.4,404.6 15.8,404 C15.2,403.6 15.6,405 20.2,410.6" stroke="#dcdcdc" stroke-width="1.3" fill="none"/><circle cx="20.4" cy="411.2" r="1.2" fill="#dcdcdc"/><path d="M27.4,413.4 C28.6,415 29.6,416.2 29.6,417.4 A2,2 0 0 1 25.6,417.4 C25.6,416.2 26.4,415 27.4,413.4 Z" fill="#dcdcdc"/><path d="M20.1,430 C21.6,433.6 25.6,436.6 25.6,440 A5.5,5.2 0 0 1 14.6,440 C14.6,436.6 18.6,433.6 20.1,430 Z" fill="#dcdcdc"/><circle cx="22" cy="462.2" r="5.4" fill="#dcdcdc"/><path d="M18.4,466.2 L12.4,471.8" stroke="#dcdcdc" stroke-width="2" stroke-linecap="round"/><g transform="translate(20.5 490.5) scale(0.9) translate(-20.5 -490.5) rotate(45 20.5 490.5)"><path d="M17.3,481.2 H23.7 V484.6 H17.3 Z" fill="#dcdcdc"/><path d="M17.2,485.6 H23.8 C26.6,490 24.8,496 20.5,501.6 C16.2,496 14.4,490 17.2,485.6 Z" stroke="#dcdcdc" stroke-width="1.3" fill="none" stroke-linejoin="round"/><path d="M20.5,501 V492.6" stroke="#dcdcdc" stroke-width="1.1"/><circle cx="20.5" cy="491.6" r="1.4" fill="#dcdcdc"/></g><path d="M14.9,533 V547.8 L18.5,544.4 L21.2,549.8 L23.3,548.8 L20.7,543.6 L25.2,543.2 Z" fill="#dcdcdc"/><rect x="12.6" y="561.6" width="15" height="11.6" fill="#6e6e6e" stroke="#dcdcdc" stroke-width="1.2"/><g fill="#dcdcdc"><rect x="16.1" y="587.4" width="2.3" height="8" rx="1.1"/><rect x="18.9" y="585.6" width="2.3" height="9" rx="1.1"/><rect x="21.7" y="586.4" width="2.3" height="9" rx="1.1"/><rect x="24.5" y="588.8" width="2.3" height="8" rx="1.1" transform="rotate(8 25.6 592)"/><path d="M16.1,593 H26.8 L27,596 C27,600 24.8,602.6 21.4,602.6 C18.6,602.6 17,601.4 15.6,599 L11.9,593.2 C11.4,592.2 12.6,591.2 13.6,592.2 L16.1,595 Z"/></g><circle cx="18.3" cy="618.2" r="5.9" stroke="#dcdcdc" stroke-width="1.5" fill="none"/><path d="M22.8,622.8 L27.4,627.4" stroke="#dcdcdc" stroke-width="2.3" stroke-linecap="round"/><path d="M18.6,614.6 A3.6,3.6 0 0 1 21.8,617.6" stroke="#dcdcdc" stroke-width="1" fill="none"/><circle cx="14" cy="646" r="2" fill="#dcdcdc"/><circle cx="20" cy="646" r="2" fill="#dcdcdc"/><circle cx="26" cy="646" r="2" fill="#dcdcdc"/><rect x="8.6" y="668.7" width="6.6" height="6.4" fill="#dadada"/><rect x="5.2" y="665.3" width="5.8" height="5.8" fill="#0a0a0a" stroke="#f0f0f0" stroke-width="1"/><path d="M24.4,668.2 H28.8 V673" stroke="#dcdcdc" stroke-width="1.4" fill="none"/><path d="M21.9,668.2 L25.4,664.9 V671.5 Z M28.8,675.6 L25.5,672.2 H32.1 Z" fill="#dcdcdc"/><rect x="14.5" y="690.5" width="19" height="19" fill="#ffffff" stroke="#2b2b2b" stroke-width="1"/><rect x="4.5" y="680.5" width="19" height="19" fill="#ffffff" stroke="#2b2b2b" stroke-width="1"/><rect x="6" y="682" width="16" height="16" fill="#00c1b0"/><rect x="11.6" y="721.6" width="16" height="12" fill="#474747" stroke="#dcdcdc" stroke-width="1.2"/><circle cx="19.6" cy="727.6" r="3.9" stroke="#f2f2f2" stroke-width="1.3" stroke-dasharray="1 1.45" fill="none"/><rect x="11.6" y="750.6" width="11" height="9" fill="none" stroke="#dcdcdc" stroke-width="1.2"/><rect x="16.8" y="747.6" width="11" height="9" fill="#535353" stroke="#dcdcdc" stroke-width="1.2"/></svg>
<svg style="left:10px;top:505px;" width="24" height="22" viewBox="10 505 24 22"><path d="M14.8,509.3 H27.4 V513.6 H26 C25.8,512.4 25.2,511.9 24,511.9 H22.7 V520.2 C22.7,521.2 23.2,521.6 24.9,521.7 V523.1 H17.3 V521.7 C19,521.6 19.5,521.2 19.5,520.2 V511.9 H18.2 C17,511.9 16.4,512.4 16.2,513.6 H14.8 Z" fill="#dcdcdc"/></svg>
<svg style="left:0px;top:25px;" width="900" height="33" viewBox="0 25 900 33"><rect x="5" y="32" width="2" height="1" fill="#404040"/><rect x="5" y="34" width="2" height="1" fill="#404040"/><rect x="5" y="36" width="2" height="1" fill="#404040"/><rect x="5" y="38" width="2" height="1" fill="#404040"/><rect x="5" y="40" width="2" height="1" fill="#404040"/><rect x="5" y="42" width="2" height="1" fill="#404040"/><rect x="5" y="44" width="2" height="1" fill="#404040"/><rect x="5" y="46" width="2" height="1" fill="#404040"/><rect x="5" y="48" width="2" height="1" fill="#404040"/><rect x="5" y="50" width="2" height="1" fill="#404040"/><path d="M53.5,30 V53" stroke="#404040" stroke-width="1"/><path d="M102.5,30 V53" stroke="#404040" stroke-width="1"/><path d="M267.5,30 V53" stroke="#404040" stroke-width="1"/><path d="M402.5,30 V53" stroke="#404040" stroke-width="1"/><path d="M531.5,30 V53" stroke="#404040" stroke-width="1"/><path d="M660.5,30 V53" stroke="#404040" stroke-width="1"/><path d="M703.5,30 V53" stroke="#404040" stroke-width="1"/><path d="M28,34.4 L36.4,42.4 H34 V49 H30 V43.3 H26.2 V49 H22 V42.4 H19.6 Z" fill="#9c9c9c"/><path d="M63.49999999999999,41.6 H75.69999999999999 M69.6,35.5 V47.7" stroke="#e0e0e0" stroke-width="1.5" fill="none"/><path d="M61.99999999999999,41.6 l2.7,-2.9 v5.8 Z M77.19999999999999,41.6 l-2.7,-2.9 v5.8 Z M69.6,34.0 l-2.9,2.7 h5.8 Z M69.6,49.2 l-2.9,-2.7 h5.8 Z" fill="#e0e0e0"/><path d="M87.3,41.3 L90.5,44.6 L93.7,41.3" stroke="#bdbdbd" stroke-width="1.2" fill="none"/><rect x="110" y="36" width="10" height="10" rx="2" fill="#dcdcdc"/><path d="M112.2,41.2 L114.3,43.4 L118,38.6" stroke="#1c1c1c" stroke-width="1.7" fill="none"/><rect x="276" y="36" width="10" height="10" rx="2" fill="#dcdcdc"/><path d="M278.2,41.2 L280.3,43.4 L284,38.6" stroke="#1c1c1c" stroke-width="1.7" fill="none"/><rect x="204.5" y="32.5" width="54" height="20" rx="3" fill="#4e4e4e" stroke="#646464" stroke-width="1"/><path d="M248.2,42.2 L251.3,45.4 L254.4,42.2" stroke="#6e6e6e" stroke-width="1.2" fill="none"/><rect x="417.6" y="34" width="1.2" height="15" fill="#a6a6a6"/><rect x="420" y="36.6" width="7" height="4" fill="#a6a6a6"/><rect x="420" y="42.6" width="11.2" height="4" fill="#a6a6a6"/><rect x="450" y="34" width="1.2" height="15" fill="#a6a6a6"/><rect x="446.4" y="36.6" width="8.4" height="4" fill="#a6a6a6"/><rect x="444.8" y="42.6" width="11.6" height="4" fill="#a6a6a6"/><rect x="481.2" y="34" width="1.2" height="15" fill="#a6a6a6"/><rect x="473" y="36.6" width="7" height="4" fill="#a6a6a6"/><rect x="468.8" y="42.6" width="11.2" height="4" fill="#a6a6a6"/><rect x="502" y="36.6" width="16" height="1.2" fill="#a6a6a6"/><rect x="502" y="46.2" width="16" height="1.2" fill="#a6a6a6"/><rect x="505.4" y="39.8" width="9.2" height="4.4" fill="#a6a6a6"/><rect x="545.8" y="36" width="14.4" height="1.2" fill="#a6a6a6"/><rect x="547.6" y="38.4" width="4.2" height="11" fill="#a6a6a6"/><rect x="554" y="38.4" width="4.2" height="6.4" fill="#a6a6a6"/><rect x="571.6" y="42.2" width="14.2" height="1.2" fill="#a6a6a6"/><rect x="574.4" y="36.8" width="4.2" height="12" fill="#a6a6a6"/><rect x="580.4" y="39.2" width="4.2" height="7.2" fill="#a6a6a6"/><rect x="598" y="48.2" width="14.2" height="1.2" fill="#a6a6a6"/><rect x="600.6" y="36.6" width="4.2" height="11" fill="#a6a6a6"/><rect x="606.8" y="41.2" width="4.2" height="6.4" fill="#a6a6a6"/><rect x="633.8" y="34.6" width="1.2" height="15" fill="#a6a6a6"/><rect x="642.8" y="34.6" width="1.2" height="15" fill="#a6a6a6"/><rect x="636.8" y="37.6" width="4.2" height="9" fill="#a6a6a6"/><circle cx="676" cy="42" r="2" fill="#e0e0e0"/><circle cx="682" cy="42" r="2" fill="#e0e0e0"/><circle cx="688" cy="42" r="2" fill="#e0e0e0"/><g stroke="#8e8e8e" stroke-width="1.05" fill="none"><circle cx="782.1" cy="38.8" r="3.5"/><path d="M778.8,38.9 C774.2,39.8 771.6,41.6 772.3,43.3 C772.8,44.6 774.4,45.4 776,45.7"/><path d="M785.3,40.5 C788.6,41.9 790.4,43.7 789.8,45.2 C789.2,46.6 786.6,47.3 784,47.3"/></g><path d="M775.9,44.6 L774.9,47.7 L781.2,47.4 Z" fill="#8e8e8e"/><g stroke="#8e8e8e" stroke-width="1.05" fill="none"><circle cx="806.8" cy="41.4" r="3.6"/><path d="M801.3,36.4 A7.4,7.4 0 1 1 799.4,42.0"/></g><path d="M799.8,38.5 L800.3,34.3 L804.2,36.9 Z" fill="#8e8e8e"/><path d="M832.30,33.40 L835.10,36.50 L833.55,36.50 L833.55,40.25 L837.30,40.25 L837.30,38.70 L840.40,41.50 L837.30,44.30 L837.30,42.75 L833.55,42.75 L833.55,46.50 L835.10,46.50 L832.30,49.60 L829.50,46.50 L831.05,46.50 L831.05,42.75 L827.30,42.75 L827.30,44.30 L824.20,41.50 L827.30,38.70 L827.30,40.25 L831.05,40.25 L831.05,36.50 L829.50,36.50 Z" stroke="#8e8e8e" stroke-width="1" fill="none" stroke-linejoin="miter"/><circle cx="858.7" cy="41" r="3.1" fill="none" stroke="#8e8e8e" stroke-width="1.1"/><path d="M850.1,41 l3.3,-2.7 v1.7 h2 v2 h-2 v1.7 Z M867.3000000000001,41 l-3.3,-2.7 v1.7 h-2 v2 h2 v1.7 Z" fill="#8e8e8e"/><path d="M858.7,33.7 l2.1,2.3 h-1.4 v1.4 h-1.4 v-1.4 h-1.4 Z" fill="#8e8e8e"/><path d="M858.7,49.3 l3.8,-3.8 h-2.2 v-1.2 h-3.2 v1.2 h-2.2 Z" fill="#8e8e8e"/><rect x="875.9" y="38.2" width="8" height="6.8" rx="0.6" fill="#8e8e8e"/><path d="M883.9,40.4 L886.6,38.8 V44.4 L883.9,42.8 Z" fill="#8e8e8e"/><path d="M894,35.6 L888.6,41.4 L894,47.2" stroke="#8e8e8e" stroke-width="0.9" fill="none"/><path d="M891.2,38.8 L893.8,41.4 L891.2,44" stroke="#8e8e8e" stroke-width="0.8" fill="none"/></svg>
<span class="t" style="left:126.00px;top:36.89px;font-size:9.7px;color:#e6e6e6;letter-spacing:-0.000px;">Selec. autom.:</span>
<span class="t" style="left:213.00px;top:38.00px;font-size:9.8px;color:#7e7e7e;letter-spacing:-0.476px;">Capa</span>
<span class="t" style="left:292.00px;top:36.89px;font-size:9.7px;color:#e6e6e6;letter-spacing:0.269px;">Mostrar contr. transf.</span>
<span class="t" style="left:713.50px;top:36.89px;font-size:9.7px;color:#8c8c8c;letter-spacing:0.021px;">Modo 3D:</span>
<div style="left:1611px;top:59px;width:171px;height:993px;background:#383838;"></div>
<div style="left:1614px;top:59px;width:168px;height:11px;background:#424242;"></div>
<div style="left:1614px;top:71px;width:37.2px;height:68px;background:#535353;"></div>
<div style="left:1614px;top:140px;width:37.2px;height:68px;background:#535353;"></div>
<div style="left:1614px;top:209.5px;width:37.2px;height:839.5px;background:#535353;"></div>
<div style="left:1654px;top:71px;width:109px;height:123.5px;background:#535353;"></div>
<div style="left:1654px;top:196px;width:109px;height:67.8px;background:#535353;"></div>
<div style="left:1654px;top:265.3px;width:109px;height:95.5px;background:#535353;"></div>
<div style="left:1654px;top:362.4px;width:109px;height:686.6px;background:#535353;"></div>
<div style="left:1766px;top:71px;width:16px;height:39.5px;background:#535353;"></div>
<div style="left:1766px;top:112px;width:16px;height:39.6px;background:#535353;"></div>
<div style="left:1766px;top:153px;width:16px;height:896px;background:#535353;"></div>
<div style="left:1652.2px;top:71px;width:1px;height:978px;background:#474747;"></div>
<div style="left:1764px;top:71px;width:1px;height:978px;background:#474747;"></div>
<div style="left:1611px;top:59px;width:171px;height:993px;overflow:hidden;background:none;"><svg style="left:0;top:0" width="171" height="993" viewBox="1611 59 171 993"><path d="M1641.0,62.4 L1638.8000000000002,64.6 L1641.0,66.8 M1645.2,62.4 L1643.0,64.6 L1645.2,66.8" stroke="#d4d4d4" stroke-width="1.2" fill="none"/><path d="M1752.8,62.4 L1750.6000000000001,64.6 L1752.8,66.8 M1757.0,62.4 L1754.8,64.6 L1757.0,66.8" stroke="#d4d4d4" stroke-width="1.2" fill="none"/><path d="M1623.5,74 V78 M1625.5,74 V78 M1627.5,74 V78 M1629.5,74 V78 M1631.5,74 V78 M1633.5,74 V78 M1635.5,74 V78 M1637.5,74 V78 M1639.5,74 V78 M1641.5,74 V78" stroke="#424242" stroke-width="1"/><path d="M1623.5,143 V147 M1625.5,143 V147 M1627.5,143 V147 M1629.5,143 V147 M1631.5,143 V147 M1633.5,143 V147 M1635.5,143 V147 M1637.5,143 V147 M1639.5,143 V147 M1641.5,143 V147" stroke="#424242" stroke-width="1"/><path d="M1699.5,74 V78 M1701.5,74 V78 M1703.5,74 V78 M1705.5,74 V78 M1707.5,74 V78 M1709.5,74 V78 M1711.5,74 V78 M1713.5,74 V78 M1715.5,74 V78 M1717.5,74 V78" stroke="#424242" stroke-width="1"/><path d="M1699.5,199 V203 M1701.5,199 V203 M1703.5,199 V203 M1705.5,199 V203 M1707.5,199 V203 M1709.5,199 V203 M1711.5,199 V203 M1713.5,199 V203 M1715.5,199 V203 M1717.5,199 V203" stroke="#424242" stroke-width="1"/><path d="M1699.5,268 V272 M1701.5,268 V272 M1703.5,268 V272 M1705.5,268 V272 M1707.5,268 V272 M1709.5,268 V272 M1711.5,268 V272 M1713.5,268 V272 M1715.5,268 V272 M1717.5,268 V272" stroke="#424242" stroke-width="1"/><rect x="1626.4" y="85.8" width="3.6" height="3.6" fill="none" stroke="#dcdcdc" stroke-width="1.1"/><rect x="1626.4" y="91.8" width="3.6" height="3.6" fill="none" stroke="#dcdcdc" stroke-width="1.1"/><rect x="1625.9" y="97.3" width="4.6" height="4.6" fill="#dcdcdc"/><path d="M1634.6,99.6 C1639.6,96.8 1640.6,91.6 1637,87.6" stroke="#dcdcdc" stroke-width="1.5" fill="none"/><path d="M1634.2,90.6 L1637.4,85.6 L1639.8,90.8 Z" fill="#dcdcdc"/><rect x="1619" y="110.8" width="27.4" height="22.6" rx="2.5" fill="#383838" stroke="#646464" stroke-width="1.2"/><path d="M1626.9,114.9 L1640.8,121.9 L1626.9,128.9 Z" fill="#dcdcdc"/><path d="M1621.8,154.8 h1.4 M1624.4,154.8 h4.6 M1621.8,158 h1.4 M1624.4,158 h4.6 M1621.8,161.2 h1.4 M1624.4,161.2 h4.6" stroke="#dcdcdc" stroke-width="1.2"/><path d="M1641.6,156.4 L1642.4,157.2 L1634.6,165.4 L1632.2,163.2 Z" fill="#dcdcdc"/><path d="M1631.6,163.8 C1633.6,164.4 1634.2,166 1633.2,167.6 C1631.8,169.8 1628.6,170.8 1625.6,170.6 C1627.2,169.6 1627.6,168.2 1628,166.8 C1628.4,165 1629.8,163.6 1631.6,163.8 Z" fill="#dcdcdc"/><path d="M1631.8,186.8 H1642" stroke="#dcdcdc" stroke-width="1.5"/><path d="M1624,194.6 H1633.6" stroke="#dcdcdc" stroke-width="1.5"/><path d="M1622,185.6 C1624,183.4 1628.8,183.2 1630.4,185.4 C1631.2,186.6 1630.8,188 1629.4,188.8 C1627,189.8 1624,188.4 1622,185.6 Z" fill="#dcdcdc"/><path d="M1639.8,189.6 C1641.8,191.6 1642.8,195.4 1641.4,198.6 C1638.4,198.2 1635.6,196.6 1634.2,194.6 C1635.6,192.6 1637.6,190.6 1639.8,189.6 Z" fill="#dcdcdc"/><g transform="rotate(180 1673 93.5)"><path d="M1673.2,86.8 C1678.6,86.8 1682,89.6 1682,93 C1682,96 1679.6,97 1677.6,96.6 C1676,96.2 1675.2,96.8 1675.4,97.8 C1675.6,99 1674.6,99.6 1672.8,99.6 C1667.6,99.6 1664,96.8 1664,93.2 C1664,89.6 1668,86.8 1673.2,86.8 Z" fill="#dcdcdc"/><circle cx="1668.4" cy="91.4" r="1.3" fill="#535353"/><circle cx="1672.6" cy="89.6" r="1.3" fill="#535353"/><circle cx="1677.2" cy="90.4" r="1.3" fill="#535353"/><circle cx="1679.2" cy="93.6" r="1.2" fill="#535353"/><circle cx="1668.2" cy="95.6" r="1.3" fill="#535353"/><circle cx="1671.6" cy="97.2" r="1.1" fill="#535353"/></g><rect x="1663.9" y="115" width="16.1" height="13" fill="#dcdcdc"/><rect x="1665.0" y="116.1" width="3.9" height="2.8" fill="#8a8a8a"/><rect x="1670.0" y="116.1" width="3.9" height="2.8" fill="#7a7a7a"/><rect x="1675.0" y="116.1" width="3.9" height="2.8" fill="#5e5e5e"/><rect x="1665.0" y="120.1" width="3.9" height="2.8" fill="#767676"/><rect x="1670.0" y="120.1" width="3.9" height="2.8" fill="#5a5a5a"/><rect x="1675.0" y="120.1" width="3.9" height="2.8" fill="#464646"/><rect x="1665.0" y="124.1" width="3.9" height="2.8" fill="#5a5a5a"/><rect x="1670.0" y="124.1" width="3.9" height="2.8" fill="#3e3e3e"/><rect x="1675.0" y="124.1" width="3.9" height="2.8" fill="#303030"/><defs><linearGradient id="gr1" x1="0" y1="0" x2="1" y2="0"><stop offset="0" stop-color="#505050"/><stop offset="1" stop-color="#c8c8c8"/></linearGradient></defs><rect x="1664.4" y="143.6" width="15.6" height="12" fill="url(#gr1)" stroke="#dcdcdc" stroke-width="1.2"/><rect x="1663.8" y="170.8" width="16.8" height="13.2" fill="#dcdcdc"/><path d="M1666.6,172.4 V182.4 M1671,172.4 V176 M1671,179 V182.4 M1673.6,172.4 V176 M1673.6,179 V182.4 M1678,172.4 V182.4 M1665,177.4 H1669.6 M1671,177.4 H1673.6 M1675,177.4 H1679.4 M1668,174.2 H1671 M1673.6,174.2 H1676.6 M1668,180.8 H1671 M1673.6,180.8 H1676.6" stroke="#4e4e4e" stroke-width="1.3" fill="none"/><path d="M1669.4,210 L1673.8,212.2 V217.4 L1669.4,219.8 L1665,217.4 V212.2 Z" fill="#858585"/><path d="M1669.4,210 L1673.8,212.2 V217.4 L1669.4,219.8 L1665,217.4 V212.2 Z M1665,212.2 L1669.4,214.4 L1673.8,212.2 M1669.4,214.4 V219.8" stroke="#dcdcdc" stroke-width="0.9" fill="none"/><rect x="1676.4" y="210" width="3.8" height="3.4" fill="#dcdcdc"/><rect x="1676.4" y="215.4" width="3.8" height="3.4" fill="#dcdcdc"/><rect x="1664.6" y="222" width="15.8" height="4" fill="#dcdcdc"/><path d="M1676.4,223.2 h2.6 l-1.3,1.8 Z" fill="#4a4a4a"/><circle cx="1672.4" cy="246.6" r="7" fill="none" stroke="#dcdcdc" stroke-width="1.3"/><path d="M1677.3,241.7 A7,7 0 0 1 1667.5,251.5 Z" fill="#dcdcdc"/><path d="M1672.8,279.2 L1681,283.6 L1672.8,288 L1664.6,283.6 Z" fill="#dcdcdc"/><path d="M1666.8,287.4 L1664.6,288.6 L1672.8,293 L1681,288.6 L1678.8,287.4 L1672.8,290.6 Z" fill="#dcdcdc"/><circle cx="1672.4" cy="312" r="5.2" fill="#8c8c8c"/><circle cx="1668.6" cy="318" r="5.2" fill="#d0d0d0"/><circle cx="1676.2" cy="318" r="5.2" fill="#c0c0c0"/><path d="M1672.4,313.4 A5.2,5.2 0 0 1 1672.4,322 A5.2,5.2 0 0 1 1672.4,313.4 Z" fill="#8a8a8a"/><circle cx="1672.4" cy="316" r="1.6" fill="#333"/><path d="M1662.6,338 H1682.4" stroke="#dcdcdc" stroke-width="1"/><path d="M1666,348 C1666,342 1669,338.4 1672.4,338 C1676,338.4 1679,342 1679,348" stroke="#dcdcdc" stroke-width="1.1" fill="none"/><rect x="1662" y="336.4" width="3.4" height="3.4" fill="#dcdcdc"/><rect x="1679.6" y="336.4" width="3.4" height="3.4" fill="#dcdcdc"/><rect x="1671" y="336.6" width="2.8" height="2.8" fill="#dcdcdc"/><rect x="1664.4" y="347.4" width="3" height="3" fill="#535353" stroke="#dcdcdc" stroke-width="1"/><rect x="1677.4" y="347.4" width="3" height="3" fill="#535353" stroke="#dcdcdc" stroke-width="1"/><circle cx="1785" cy="90.6" r="6.6" fill="none" stroke="#dcdcdc" stroke-width="1.3"/><rect x="1776.4" y="126.6" width="12" height="12.6" rx="1" fill="none" stroke="#dcdcdc" stroke-width="1.2"/><rect x="1778.8" y="129" width="12" height="12.6" rx="1" fill="#535353" stroke="#dcdcdc" stroke-width="1.2"/></svg></div>
<span class="t" style="left:1691.00px;top:89.60px;font-size:9.8px;color:#efefef;font-weight:700;letter-spacing:-0.122px;">Color</span>
<span class="t" style="left:1691.00px;top:117.80px;font-size:9.8px;color:#efefef;font-weight:700;letter-spacing:-0.004px;">Muestras</span>
<span class="t" style="left:1691.00px;top:145.80px;font-size:9.8px;color:#efefef;font-weight:700;letter-spacing:0.018px;">Degradados</span>
<span class="t" style="left:1691.00px;top:173.80px;font-size:9.8px;color:#efefef;font-weight:700;letter-spacing:0.229px;">Motivos</span>
<span class="t" style="left:1691.00px;top:214.80px;font-size:9.8px;color:#efefef;font-weight:700;letter-spacing:0.119px;">Propiedad...</span>
<span class="t" style="left:1691.00px;top:242.90px;font-size:9.8px;color:#efefef;font-weight:700;letter-spacing:-0.233px;">Ajustes</span>
<span class="t" style="left:1691.00px;top:283.70px;font-size:9.8px;color:#efefef;font-weight:700;letter-spacing:-0.504px;">Capas</span>
<span class="t" style="left:1691.00px;top:311.80px;font-size:9.8px;color:#efefef;font-weight:700;letter-spacing:-0.331px;">Canales</span>
<span class="t" style="left:1691.00px;top:339.70px;font-size:9.8px;color:#efefef;font-weight:700;letter-spacing:-0.212px;">Trazados</span>
<div style="left:1358px;top:59px;width:254px;height:690px;overflow:hidden;background:none;"><div style="left:20px;top:9px;width:234px;height:652px;background:#4d4d4d;box-shadow:0 3px 7px 0 rgba(0,0,0,0.5);"></div></div>
<div style="left:1378px;top:68px;width:234px;height:3.5px;background:#333333;"></div>
<div style="left:1378px;top:72px;width:234px;height:27px;background:#424242;"></div>
<div style="left:1379px;top:72px;width:54.8px;height:27.5px;background:#464646;"></div>
<div style="left:1434px;top:72px;width:58px;height:28px;background:#535353;"></div>
<div style="left:1378px;top:99px;width:56px;height:1px;background:#383838;"></div>
<div style="left:1492px;top:99px;width:120px;height:1px;background:#383838;"></div>
<div style="left:1378px;top:68px;width:1px;height:652px;background:#383838;"></div>
<span class="t" style="left:1388.00px;top:79.50px;font-size:9.8px;color:#a8a8a8;font-weight:700;letter-spacing:0.073px;">Historia</span>
<span class="t" style="left:1443.00px;top:79.50px;font-size:9.8px;color:#f6f6f6;font-weight:700;letter-spacing:-0.296px;">Acciones</span>
<svg style="left:1560px;top:76px;" width="52" height="20" viewBox="1560 76 52 20"><path d="M1573.2,82 L1576.8,85.5 L1573.2,89 M1578.2,82 L1581.8,85.5 L1578.2,89" stroke="#d4d4d4" stroke-width="1" fill="none"/><path d="M1589.5,80 V92" stroke="#b4b4b4" stroke-width="1"/><path d="M1597,82.5 H1607 M1597,84.5 H1607 M1597,86.5 H1607 M1597,88.5 H1607" stroke="#d4d4d4" stroke-width="1"/></svg>
<div style="left:1379px;top:100px;width:233px;height:3px;background:#535353;"></div>
<div style="left:1379px;top:103px;width:233px;height:586px;background:#4d4d4d;"></div>
<div style="left:1596px;top:103px;width:16px;height:586px;background:#4a4a4a;"></div>
<div style="left:1379.5px;top:103px;width:19.5px;height:19.2px;background:#535353;"></div>
<div style="left:1400.3px;top:103px;width:195.5px;height:19.2px;background:#535353;"></div>
<div style="left:1379.5px;top:123.2px;width:19.5px;height:19.2px;background:#535353;"></div>
<div style="left:1400.3px;top:123.2px;width:195.5px;height:19.2px;background:#535353;"></div>
<div style="left:1379.5px;top:143.3px;width:19.5px;height:39.2px;background:#535353;"></div>
<div style="left:1400.3px;top:143.3px;width:195.5px;height:39.2px;background:#535353;"></div>
<svg style="left:1379px;top:100px;" width="233" height="90" viewBox="1379 100 233 90"><rect x="1384.4" y="107.4" width="12" height="10.8" fill="#4e4e4e"/><path d="M1384.4,118.2 V107.4 H1396.4" stroke="#494949" stroke-width="1" fill="none"/><path d="M1396.4,107.4 V118.2 H1384.4" stroke="#656565" stroke-width="1" fill="none"/><rect x="1406.5" y="107.5" width="10" height="10" fill="none" stroke="#e0e0e0" stroke-width="1"/><path d="M1406.5,110.0 H1416.5" stroke="#e0e0e0" stroke-width="1"/><path d="M1428.6,108 L1432.0,112.6 L1428.6,117.2" stroke="#bdbdbd" stroke-width="1" fill="none"/><path d="M1443,107.60000000000001 H1448.2 V109.2 H1457 V118.0 H1443 Z" fill="#e0e0e0"/><path d="M1443,108.7 H1448.4" stroke="#535353" stroke-width="0.8"/><rect x="1384.4" y="127.6" width="12" height="10.8" fill="#4e4e4e"/><path d="M1384.4,138.4 V127.6 H1396.4" stroke="#494949" stroke-width="1" fill="none"/><path d="M1396.4,127.6 V138.4 H1384.4" stroke="#656565" stroke-width="1" fill="none"/><rect x="1406.5" y="127.5" width="10" height="10" fill="none" stroke="#e0e0e0" stroke-width="1"/><path d="M1406.5,130.0 H1416.5" stroke="#e0e0e0" stroke-width="1"/><path d="M1428.6,128.2 L1432.0,132.79999999999998 L1428.6,137.39999999999998" stroke="#bdbdbd" stroke-width="1" fill="none"/><path d="M1443,127.80000000000001 H1448.2 V129.4 H1457 V138.20000000000002 H1443 Z" fill="#e0e0e0"/><path d="M1443,128.9 H1448.4" stroke="#535353" stroke-width="0.8"/><path d="M1386.4,153.2 L1389.3000000000002,156.1 L1394.6000000000001,149.3" stroke="#f4f4f4" stroke-width="1.8" fill="none"/><rect x="1405" y="147.8" width="12" height="10.8" fill="#4e4e4e"/><path d="M1405,158.60000000000002 V147.8 H1417" stroke="#494949" stroke-width="1" fill="none"/><path d="M1417,147.8 V158.60000000000002 H1405" stroke="#656565" stroke-width="1" fill="none"/><path d="M1426.4,150.4 L1431.0,154.8 L1435.6000000000001,150.4" stroke="#9a9a9a" stroke-width="1" fill="none"/><path d="M1443.6,148.2 H1448.6 L1449.8,150.4 H1456.4 V153.0 H1443.6 Z" fill="none" stroke="#e0e0e0" stroke-width="1.1"/><rect x="1443" y="153.0" width="14" height="5.4" fill="#e0e0e0"/><path d="M1386.4,173.39999999999998 L1389.3000000000002,176.29999999999998 L1394.6000000000001,169.5" stroke="#f4f4f4" stroke-width="1.8" fill="none"/><rect x="1405" y="168" width="12" height="10.8" fill="#4e4e4e"/><path d="M1405,178.8 V168 H1417" stroke="#494949" stroke-width="1" fill="none"/><path d="M1417,168 V178.8 H1405" stroke="#656565" stroke-width="1" fill="none"/><path d="M1444.6,168.4 L1448.0,173.0 L1444.6,177.6" stroke="#bdbdbd" stroke-width="1" fill="none"/></svg>
<span class="t" style="left:1466.00px;top:109.44px;font-size:10px;color:#eaeaea;letter-spacing:-0.036px;">Acciones por defecto</span>
<span class="t" style="left:1466.00px;top:128.94px;font-size:10px;color:#eaeaea;letter-spacing:-0.189px;">MCP Facebook Fix 960 - P...</span>
<span class="t" style="left:1466.00px;top:148.94px;font-size:10px;color:#eaeaea;letter-spacing:-0.079px;">Free Dramatic Photoshop ...</span>
<span class="t" style="left:1459.00px;top:168.84px;font-size:10px;color:#eaeaea;letter-spacing:-0.124px;">Dramatic Style</span>
<div style="left:1379px;top:689px;width:233px;height:1px;background:#383838;"></div>
<div style="left:1379px;top:690px;width:233px;height:22px;background:#535353;"></div>
<div style="left:1379px;top:712px;width:233px;height:2px;background:#383838;"></div>
<div style="left:1379px;top:714px;width:233px;height:6.4px;background:#535353;"></div>
<svg style="left:1379px;top:689px;" width="233" height="31" viewBox="1379 689 233 31"><rect x="1503.5" y="689.5" width="28" height="22.5" fill="#464646"/><path d="M1503.5,712 V689.8 H1531.5 V712" stroke="#606060" stroke-width="1" fill="none"/><rect x="1427" y="698" width="7" height="7" fill="#9a9a9a"/><circle cx="1460" cy="701.2" r="4.7" fill="#9a9a9a"/><path d="M1486,696.6 L1493.4,701.2 L1486,705.8 Z" fill="#9a9a9a"/><path d="M1512,695.9 H1518 V697 H1512 Z M1512,698 H1524.2 V706 H1512 Z" fill="#dedede"/><rect x="1545.6" y="696.6" width="10" height="10" fill="none" stroke="#e4e4e4" stroke-width="1.2"/><path d="M1550.6,698.8 V704.4 M1547.8,701.6 H1553.4" stroke="#e4e4e4" stroke-width="1.3"/><path d="M1573,698.6 H1584 M1576.4,698.4 V696.6 H1580.6 V698.4" stroke="#aaaaaa" stroke-width="1.1" fill="none"/><path d="M1574.4,699.4 L1575,707.4 H1582 L1582.6,699.4" stroke="#aaaaaa" stroke-width="1.2" fill="none"/><path d="M1576.9,700.6 V706 M1578.5,700.6 V706 M1580.1,700.6 V706" stroke="#aaaaaa" stroke-width="0.9"/><path d="M1486.5,714.2 V718.2 M1488.5,714.2 V718.2 M1490.5,714.2 V718.2 M1492.5,714.2 V718.2 M1494.5,714.2 V718.2 M1496.5,714.2 V718.2 M1498.5,714.2 V718.2 M1500.5,714.2 V718.2 M1502.5,714.2 V718.2 M1504.5,714.2 V718.2" stroke="#3e3e3e" stroke-width="1"/></svg>
<div style="left:1033.2px;top:415.2px;width:389.2px;height:111.2px;background:#535353;box-shadow:0 2px 8px 0 rgba(0,0,0,0.4);"></div>
<div style="left:1033.2px;top:415.2px;width:389.2px;height:1px;background:#5e5e5e;"></div>
<div style="left:1033px;top:415.2px;width:1px;height:31px;background:#6a6a6a;"></div>
<div style="left:1033.4px;top:415.6px;width:388.9px;height:30.2px;background:#ffffff;"></div>
<span class="t" style="left:1042.60px;top:425.14px;font-size:12px;color:#000000;letter-spacing:-0.138px;">Grupo nuevo</span>
<svg style="left:1400px;top:423px;" width="14" height="14" viewBox="1400 423 14 14"><path d="M1402.2,425.2 L1411.8,434.8 M1411.8,425.2 L1402.2,434.8" stroke="#111" stroke-width="1.1" fill="none"/></svg>
<span class="t" style="left:1055.20px;top:461.64px;font-size:12px;color:#d6d6d6;letter-spacing:0.231px;">Nombre:</span>
<div style="left:1109px;top:456px;width:207px;height:20.2px;background:#454545;border:1px solid #2273d9;"></div>
<span class="t" style="left:1114.20px;top:461.64px;font-size:12px;color:#f4f4f4;letter-spacing:-0.154px;">Marca de agua</span>
<div style="left:1193.2px;top:460.4px;width:1px;height:14px;background:#f0f0f0;"></div>
<div style="left:1333.3px;top:456.3px;width:73.6px;height:21.4px;border:2px solid #c4c4c4;border-radius:14px;"></div>
<span class="t" style="left:1364.40px;top:464.55px;font-size:11.4px;color:#f0f0f0;letter-spacing:-0.871px;">OK</span>
<div style="left:1333.5px;top:490.4px;width:75.4px;height:23.4px;border:1px solid #787878;border-radius:14px;"></div>
<span class="t" style="left:1349.40px;top:497.64px;font-size:12px;color:#f0f0f0;letter-spacing:-0.061px;">Cancelar</span>
<svg style="left:0;top:0;pointer-events:none" width="1782" height="1052" viewBox="0 0 1782 1052"><rect x="1006.5" y="400.25" width="440.4" height="155.9" rx="12" ry="12" fill="none" stroke="#ed1c24" stroke-width="4.8"/><rect x="1494.6" y="678.6" width="47.8" height="47.8" rx="6.8" ry="6.8" fill="none" stroke="#ed1c24" stroke-width="5.2"/></svg>
</div></body></html>
